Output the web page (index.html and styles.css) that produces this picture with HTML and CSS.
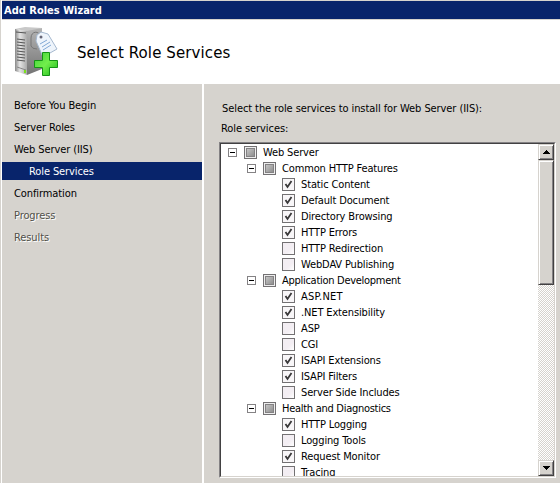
FILE: index.html
```html
<!DOCTYPE html>
<html lang="en">
<head>
<meta charset="utf-8">
<title>Add Roles Wizard</title>
<link rel="stylesheet" href="styles.css">
</head>
<body>
<div class="window">
  <div class="titlebar">Add Roles Wizard</div>
  <header class="header">
    <svg class="server" width="46" height="50" viewBox="0 0 46 50">
      <defs>
        <linearGradient id="front" x1="0" x2="1"><stop offset="0" stop-color="#888"/><stop offset=".4" stop-color="#e4e4e4"/><stop offset="1" stop-color="#aaa"/></linearGradient>
        <linearGradient id="side" x1="0" x2="0" y2="1"><stop offset="0" stop-color="#b4b4b4"/><stop offset="1" stop-color="#747474"/></linearGradient>
        <linearGradient id="plus" x2="1" y2="1"><stop offset="0" stop-color="#3fd038"/><stop offset=".5" stop-color="#72ee4c"/><stop offset="1" stop-color="#18b818"/></linearGradient>
      </defs>
      <path d="M1 2 11 0 28 1 18 5Z" fill="#c8c8c8"/>
      <path d="M13 4 28 1V42L13 48Z" fill="url(#side)"/>
      <path d="M1 2 13 4V48L1 44Z" fill="url(#front)"/>
      <path d="M2 5 12 6M3 12 11 13M3 15 11 16M3 18 11 19M3 21 11 22M3 24 11 25M3 27 11 28M3 30 11 31M3 33 11 34" stroke="#555" fill="none"/>
      <path d="M3 40 12 43" stroke="#888"/><path d="M10 43h2v3h-2z" fill="#7be01c"/>
      <path d="M27 10C25 3 17 4 17 11V19Q18 22 23 22" fill="none" stroke="#777"/>
      <path d="M23 8 27 5 34 7 43 22 29 30 22 14Z" fill="#eef4fb" stroke="#a5b8ce"/>
      <circle cx="27" cy="10" r="1.500" fill="#667"/>
      <path d="M26 17 33 13M28 20 36 15M29 23 37 18" stroke="#82a9d6" fill="none"/>
      <path d="M28.500 25.500h7v8h8v7h-8v8h-7v-8h-8v-7h8z" fill="url(#plus)" stroke="#159315"/>
    </svg>
    <h1>Select Role Services</h1>
  </header>
  <div class="body">
    <nav class="nav">
      <div>Before You Begin</div>
      <div>Server Roles</div>
      <div>Web Server (IIS)</div>
      <div class="active">Role Services</div>
      <div>Confirmation</div>
      <div class="off">Progress</div>
      <div class="off">Results</div>
    </nav>
    <main class="main">
      <p class="intro">Select the role services to install for Web Server (IIS):</p>
      <p class="label">Role services:</p>
      <div class="frame"><div class="inner">
        <div class="tree">
          <div class="row root"><i class="toggle"></i><i class="box mixed"></i>Web Server</div>
          <div class="row group"><i class="toggle"></i><i class="box mixed"></i>Common HTTP Features</div>
          <div class="row"><i class="box on"></i>Static Content</div>
          <div class="row"><i class="box on"></i>Default Document</div>
          <div class="row"><i class="box on"></i>Directory Browsing</div>
          <div class="row"><i class="box on"></i>HTTP Errors</div>
          <div class="row"><i class="box"></i>HTTP Redirection</div>
          <div class="row"><i class="box"></i>WebDAV Publishing</div>
          <div class="row group tight"><i class="toggle"></i><i class="box mixed"></i>Application Development</div>
          <div class="row wide"><i class="box on"></i>ASP.NET</div>
          <div class="row"><i class="box on"></i>.NET Extensibility</div>
          <div class="row"><i class="box"></i>ASP</div>
          <div class="row"><i class="box"></i>CGI</div>
          <div class="row"><i class="box on"></i>ISAPI Extensions</div>
          <div class="row"><i class="box on"></i>ISAPI Filters</div>
          <div class="row"><i class="box"></i>Server Side Includes</div>
          <div class="row group tight"><i class="toggle"></i><i class="box mixed"></i>Health and Diagnostics</div>
          <div class="row"><i class="box on"></i>HTTP Logging</div>
          <div class="row"><i class="box"></i>Logging Tools</div>
          <div class="row"><i class="box on"></i>Request Monitor</div>
          <div class="row"><i class="box"></i>Tracing</div>
        </div>
        <div class="scroll">
          <div class="btn"><svg width="7" height="4" shape-rendering="crispEdges"><path d="M3 0h1v1h1v1h1v1h1v1H0V3h1V2h1V1h1z"/></svg></div>
          <div class="btn thumb"></div>
          <div class="track"></div>
          <div class="btn"><svg width="7" height="4" shape-rendering="crispEdges"><path d="M0 0h7v1H6v1H5v1H4v1H3V3H2V2H1V1H0z"/></svg></div>
        </div>
      </div></div>
    </main>
  </div>
</div>
</body>
</html>
```
FILE: styles.css
```css
* { box-sizing: border-box; }
body { margin: 0; width: 560px; height: 483px; overflow: hidden; background: #d6d3ce; color: #000; font: 11px/16px "DejaVu Sans Condensed", "DejaVu Sans", sans-serif; }
h1, p { margin: 0; font-weight: normal; }
.window { height: 483px; padding: 1px 0 0 2px; display: flex; flex-direction: column; box-shadow: inset 1px 0 #d6d3ce, inset 2px 0 #fff; }
.titlebar { height: 18px; background: #08246b; color: #fff; font-weight: bold; line-height: 19px; padding-left: 2px; }
.header { height: 64px; margin-top: 1px; background: #fff; display: flex; align-items: center; }
.server { margin-left: 12px; }
h1 { font: 15px/20px "DejaVu Sans", sans-serif; letter-spacing: 0.1px; margin: 2px 0 0 17px; }
.body { flex: 1; display: flex; min-height: 0; }
.nav { width: 202px; border-right: 2px solid #fff; padding-top: 12px; letter-spacing: -0.1px; }
.nav div { height: 18px; line-height: 20px; margin-bottom: 4px; padding-left: 12px; white-space: nowrap; }
.nav .active { background: #08246b; color: #fff; padding-left: 27px; }
.nav .off { color: #52514a; text-shadow: 1px 1px #fff; }
.main { flex: 1; padding: 17px 0 0 15px; letter-spacing: -0.08px; }
.intro { padding-left: 3px; }
.label { padding-left: 2px; margin-top: 4px; }
.frame { width: 337px; height: 336px; margin-top: 5px; border: 1px solid; border-color: #848284 #fff #fff #848284; }
.inner { height: 334px; border: 1px solid; border-color: #424142 #d6d3ce #d6d3ce #424142; background: #fff; display: flex; overflow: hidden; }
.tree { flex: 1; height: 332px; overflow: hidden; letter-spacing: -0.14px; }
.row { height: 16px; display: flex; align-items: center; padding: 2px 0 0 61px; white-space: nowrap; }
.group { padding-left: 26px; }
.root { padding-left: 7px; }
.tight { letter-spacing: -0.28px; }
.wide { letter-spacing: 0.25px; }
.toggle { width: 9px; height: 9px; border: 1px solid #848284; margin: 0 7px 2px 0; background: linear-gradient(#000, #000) 1px 3px / 5px 1px no-repeat; }
.box { width: 13px; height: 13px; border: 1px solid #737173; margin: 0 6px 2px 0; background: linear-gradient(135deg, #f3eef3 60%, #fff); }
.on { background: url("data:image/svg+xml,%3Csvg xmlns='http://www.w3.org/2000/svg' width='11' height='11'%3E%3Cpath d='M2.500 5 4.500 8 8.500 2' fill='none' stroke='%23393839' stroke-width='1.800'/%3E%3C/svg%3E"), #f8f6f8; }
.mixed { box-shadow: inset 0 0 0 1px #eee, inset 0 0 0 2px #848284; background: linear-gradient(135deg, #d4d4d4, #808080); }
.scroll { width: 16px; display: flex; flex-direction: column; }
.btn { height: 16px; border: 1px solid; border-color: #d6d3ce #424142 #424142 #d6d3ce; box-shadow: inset 1px 1px #fff, inset -1px -1px #848284; background: #d6d3ce; display: flex; align-items: center; justify-content: center; }
.thumb { height: 125px; }
.track { flex: 1; background: conic-gradient(#fff 25%, #d6d3ce 0 50%, #fff 0 75%, #d6d3ce 0) 0 0 / 2px 2px; }
```
